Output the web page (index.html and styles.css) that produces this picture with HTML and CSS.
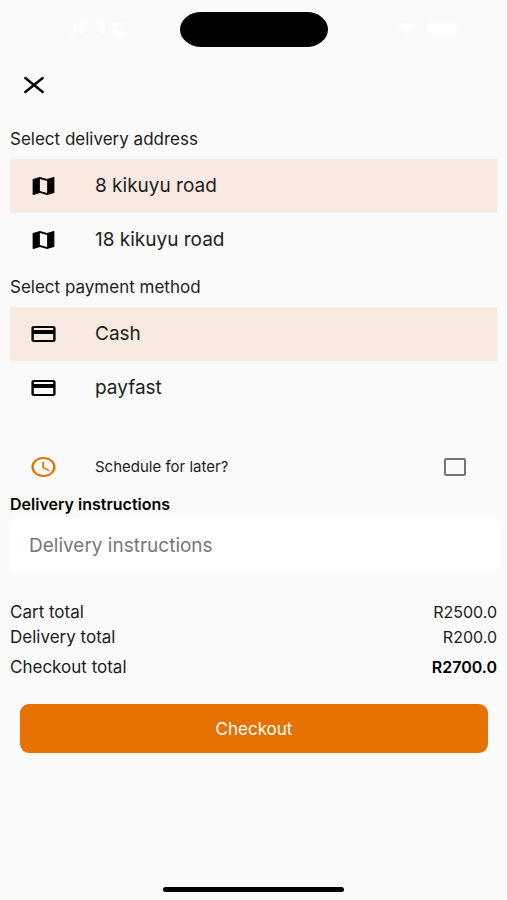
FILE: index.html
```html
<!DOCTYPE html>
<html lang="en">
<head>
<meta charset="utf-8">
<meta name="viewport" content="width=device-width, initial-scale=1">
<title>Checkout</title>
<link rel="stylesheet" href="styles.css">
</head>
<body>
<svg class="sprite" aria-hidden="true">
  <symbol id="map" viewBox="0 0 24 24" preserveAspectRatio="none"><path d="M20.5 3l-.16.03L15 5.1 9 3 3.36 4.9c-.21.07-.36.25-.36.48V20.5c0 .28.22.5.5.5l.16-.03L9 18.9l6 2.1 5.64-1.9c.21-.07.36-.25.36-.48V3.5c0-.28-.22-.5-.5-.5zM15 19l-6-2.11V5l6 2.11V19z"/></symbol>
  <symbol id="card" viewBox="0 0 24 24" preserveAspectRatio="none"><path d="M20 4H4c-1.11 0-1.99.89-1.99 2L2 18c0 1.11.89 2 2 2h16c1.11 0 2-.89 2-2V6c0-1.11-.89-2-2-2zm0 14H4v-6h16v6zm0-10H4V6h16v2z"/></symbol>
</svg>
<div class="screen">
  <header class="status">
    <svg class="status-left" viewBox="0 0 64 16" aria-hidden="true"><path d="M2 13h8V4M16 13V4h10M30 4h8v9M42 4h8v9h12M52 4h10"/></svg>
    <div class="island"></div>
    <svg class="status-right" viewBox="0 0 68 16" aria-hidden="true"><path d="M2 6q9-6 18 0l-9 8z"/><rect x="31" y="3" width="32" height="11" rx="5"/></svg>
  </header>
  <main class="content">
    <button class="close" type="button" aria-label="Close">
      <svg viewBox="0 0 20 16"><path d="M1.300 1 18.700 15M18.700 1 1.300 15"/></svg>
    </button>
    <fieldset class="group">
      <legend class="title">Select delivery address</legend>
      <label class="option"><input type="radio" name="address" checked><svg class="icon"><use href="#map"/></svg>8 kikuyu road</label>
      <label class="option"><input type="radio" name="address"><svg class="icon"><use href="#map"/></svg>18 kikuyu road</label>
    </fieldset>
    <fieldset class="group">
      <legend class="title">Select payment method</legend>
      <label class="option"><input type="radio" name="payment" checked><svg class="icon"><use href="#card"/></svg>Cash</label>
      <label class="option"><input type="radio" name="payment"><svg class="icon"><use href="#card"/></svg>payfast</label>
    </fieldset>
    <div class="schedule">
      <svg class="icon clock" viewBox="0 0 24 24" preserveAspectRatio="none"><path d="M11.990 2C6.470 2 2 6.480 2 12s4.470 10 9.990 10C17.520 22 22 17.520 22 12S17.520 2 11.990 2zM12 20c-4.420 0-8-3.580-8-8s3.580-8 8-8 8 3.580 8 8-3.580 8-8 8zm.5-13H11v6l5.250 3.150.75-1.230-4.500-2.670z"/></svg>
      <label for="later">Schedule for later?</label>
      <input class="check" type="checkbox" id="later">
    </div>
    <label class="note-label" for="note">Delivery instructions</label>
    <input class="note" type="text" id="note" placeholder="Delivery instructions">
    <dl class="totals">
      <div class="line"><dt>Cart total</dt><dd>R2500.0</dd></div>
      <div class="line"><dt>Delivery total</dt><dd>R200.0</dd></div>
      <div class="line grand"><dt>Checkout total</dt><dd>R2700.0</dd></div>
    </dl>
    <button class="checkout" type="button">Checkout</button>
  </main>
  <div class="home"></div>
</div>
</body>
</html>
```
FILE: styles.css
```css
* { box-sizing: border-box; }

body {
  margin: 0;
  background: #fafafa;
  color: #1c1c1c;
  font: 17px/24px Inter, "Open Sans", sans-serif;
}

button, input { font: inherit; }

.sprite { display: none; }

.screen {
  min-height: 100vh;
  display: flex;
  flex-direction: column;
}

.status {
  display: grid;
  grid-template-columns: 1fr 148px 1fr;
  justify-items: center;
  padding-top: 12px;
}

.status-left, .status-right { height: 16px; margin-top: 8px; fill: #fff; }
.status-left { width: 64px; margin-left: 14px; fill: none; stroke: #fff; stroke-width: 3; }
.status-right { width: 68px; margin-left: 24px; }

.island {
  width: 148px;
  height: 35px;
  border-radius: 22px / 18px;
  background: #000;
}

.content {
  flex: 1;
  display: flex;
  flex-direction: column;
  padding: 20px 10px 0;
}

.close {
  align-self: flex-start;
  width: 48px;
  height: 36px;
  padding: 10px 14px;
  border: 0;
  background: none;
}

.close svg {
  display: block;
  width: 20px;
  height: 16px;
  overflow: visible;
  fill: none;
  stroke: #000;
  stroke-width: 2.4;
  stroke-linecap: round;
}

.group { min-width: 0; margin: 0; padding: 0; border: 0; }
.close + .group { margin-top: 16px; }
.title { padding: 8px 0; }

.option {
  position: relative;
  display: flex;
  align-items: center;
  gap: 37px;
  height: 54px;
  padding-left: 19px;
  font-size: 19px;
}

.option input { position: absolute; opacity: 0; margin: 0; }
.option:has(:checked) { background: #f8eae1; }
.icon { flex: none; width: 29px; height: 24px; fill: #000; }

.schedule {
  display: flex;
  align-items: center;
  gap: 37px;
  height: 48px;
  margin-top: 28px;
  padding: 0 31px 0 19px;
  font-size: 15px;
}

.schedule label { flex: 1; }
.clock { fill: #e57200; }

.check {
  appearance: none;
  width: 22px;
  height: 18px;
  margin: 0;
  border: 2px solid #757575;
  border-radius: 2px;
}

.note-label { color: #000; font-weight: 600; font-size: 16px; line-height: 26px; }

.note {
  height: 54px;
  margin: 1px -2px 0 0;
  padding: 0 19px;
  border: 0;
  border-radius: 6px;
  background: #fff;
  color: #1c1c1c;
  font-size: 19px;
}

.note::placeholder { color: #777; opacity: 1; }

.totals { margin: 28px 0 0; line-height: 25px; }
.line { display: flex; justify-content: space-between; }
.grand { margin-top: 5px; }
dd { margin: 0; font-size: 16px; }
.grand dd { color: #000; font-weight: 600; }

.checkout {
  height: 49px;
  margin: 24px 9px 0 10px;
  border: 0;
  border-radius: 9px;
  background: #e57200;
  color: #fff;
}

.home {
  align-self: center;
  width: 181px;
  height: 5px;
  margin: 16px 0 8px;
  border-radius: 3px;
  background: #000;
}
```
